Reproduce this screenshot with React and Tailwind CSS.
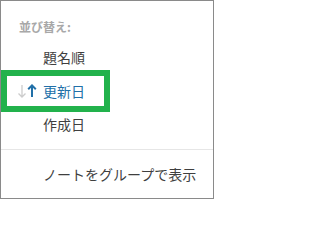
export default function App() {
  return (
    <div className="w-[214px] h-[199px] border border-[#8a8a8a] bg-white font-['Noto_Sans_CJK_JP',sans-serif] text-[#3f3f3f]">
      <div className="h-[40px] pt-[18px] pl-[18px] text-[12px] leading-[16px] font-bold text-[#a8a8a8]">
        並び替え:
      </div>
      <div className="h-[29px] pt-[6px] pl-[42px] text-[14px] leading-[20px]">題名順</div>
      <div className="flex h-[42px] w-[109px] items-center border-[6px] border-[#22b24c] pl-[10px] text-[14px] leading-[20px] text-[#2170a8]">
        <svg width="10" height="14" viewBox="0 0 10 14" className="mr-[0px]">
          <path d="M5 1v12M1.5 9.5L5 13l3.5-3.5" fill="none" stroke="#cccccc" strokeWidth="1.3" />
        </svg>
        <svg width="10" height="14" viewBox="0 0 10 14" className="mr-[6px]">
          <path d="M5 13V1.5M1.2 5.2L5 1.4l3.8 3.8" fill="none" stroke="#2170a8" strokeWidth="2" />
        </svg>
        <span>更新日</span>
      </div>
      <div className="h-[37px] pt-[2px] pl-[42px] text-[14px] leading-[20px]">作成日</div>
      <div className="h-px bg-[#e6e6e6]" />
      <div className="pt-[14px] pl-[42px] text-[14px] leading-[20px]">ノートをグループで表示</div>
    </div>
  );
}
